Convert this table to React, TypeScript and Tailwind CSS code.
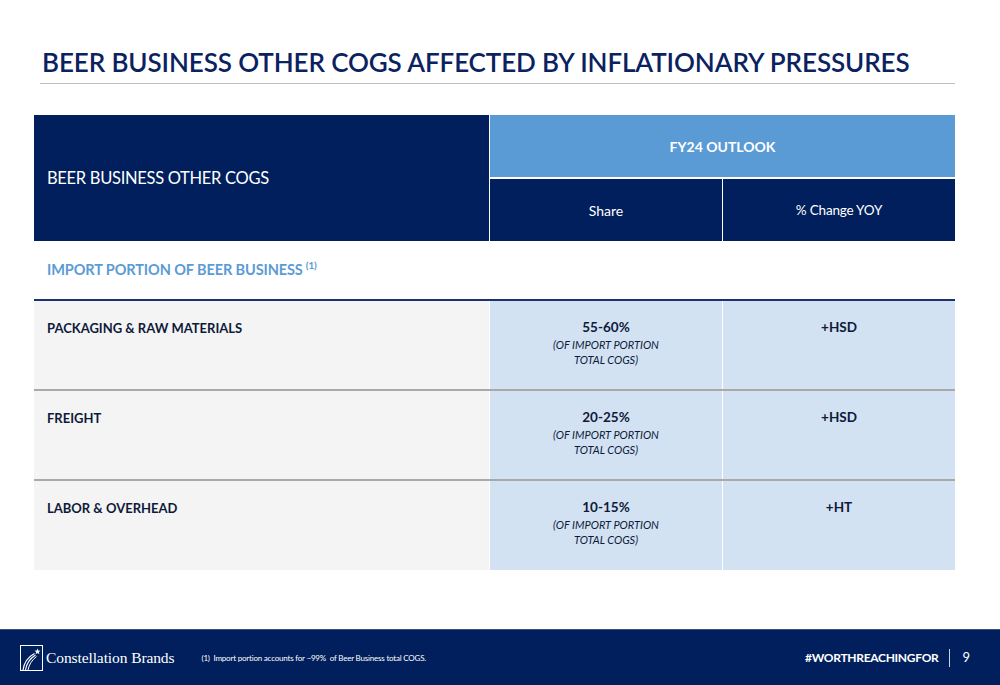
import React from "react";

const body = { fontFamily: "Lato, 'Open Sans', sans-serif" };

function Logo() {
  return (
    <svg width="23" height="26" viewBox="0 0 23 26" fill="none">
      <rect x="0.5" y="0.5" width="22" height="25" stroke="white" strokeWidth="1" />
      <path d="M3 25 C4 18 8 12 14.5 8.5" stroke="white" strokeWidth="1.2" />
      <path d="M5.5 25 C6.5 18.5 10 13.5 15.5 10" stroke="white" strokeWidth="1.2" />
      <path d="M8 25 C9 19.5 12 15 16.5 11.5" stroke="white" strokeWidth="1" />
      <path d="M17.5 3.5 L18.3 5.6 L20.5 5.7 L18.8 7 L19.4 9.2 L17.5 8 L15.6 9.2 L16.2 7 L14.5 5.7 L16.7 5.6 Z" fill="white" />
    </svg>
  );
}

const rows = [
  { label: "PACKAGING & RAW MATERIALS", share: "55-60%", yoy: "+HSD", h: "h-[88px]" },
  { label: "FREIGHT", share: "20-25%", yoy: "+HSD", h: "h-[88px]" },
  { label: "LABOR & OVERHEAD", share: "10-15%", yoy: "+HT", h: "h-[89px]" },
];

export default function App() {
  return (
    <div className="w-[1000px] h-[685px] bg-white flex flex-col overflow-hidden" style={body}>
      <div className="px-[40px] pt-[44px]">
        <h1
          className="text-[26px] leading-[36px] text-[#0b2261] pl-[2px] tracking-[-0.1px] whitespace-nowrap font-semibold"
          style={{ fontFamily: "Lato, sans-serif" }}
        >
          BEER BUSINESS OTHER COGS AFFECTED BY INFLATIONARY PRESSURES
        </h1>
        <div className="mt-[3px] h-px w-[915px] bg-[#bfbfbf]" />
      </div>

      <div className="ml-[34px] w-[921px] mt-[31px]">
        <div className="grid grid-cols-[455px_232px_232px] gap-x-px gap-y-[2px] bg-white">
          <div className="row-span-2 bg-[#001f5c] flex items-center pl-[13px] text-white text-[16.5px] tracking-[-0.3px]">
            BEER BUSINESS OTHER COGS
          </div>
          <div className="col-span-2 h-[62px] bg-[#5b9bd5] flex items-center justify-center text-white font-bold text-[14px]">
            FY24 OUTLOOK
          </div>
          <div className="h-[62px] bg-[#001f5c] flex items-center justify-center text-white text-[14px]">Share</div>
          <div className="h-[62px] bg-[#001f5c] flex items-center justify-center text-white text-[13.5px] tracking-[-0.2px]">% Change YOY</div>
        </div>

        <div className="h-[58px] flex items-center pl-[13px] text-[#5b9bd5] font-bold text-[14.5px] tracking-[-0.1px]">
          IMPORT PORTION OF BEER BUSINESS
          <sup className="text-[10px] ml-[3px] -top-[5px]">(1)</sup>
        </div>
        <div className="h-[2px] bg-[#1f3070]" />

        {rows.map((r, i) => (
          <div key={r.label}>
            {i > 0 && <div className="h-[2px] bg-[#a9a9a9]" />}
            <div className={`grid grid-cols-[455px_232px_232px] gap-x-px ${r.h}`}>
              <div className="bg-[#f4f4f4] pl-[13px] pt-[18px] text-[#0f1a3a] font-bold text-[13px] leading-[18px]">
                {r.label}
              </div>
              <div className="bg-[#d2e2f3] flex flex-col items-center pt-[17px] text-[#0f1a3a]">
                <div className="font-bold text-[13.5px] leading-[19px]">{r.share}</div>
                <div className="italic text-[11px] leading-[15px]">(OF IMPORT PORTION</div>
                <div className="italic text-[11px] leading-[15px]">TOTAL COGS)</div>
              </div>
              <div className="bg-[#d2e2f3] flex justify-center pt-[17px] text-[#0f1a3a] font-bold text-[13.5px] leading-[19px]">
                {r.yoy}
              </div>
            </div>
          </div>
        ))}
      </div>

      <div className="mt-auto h-[56px] bg-[#001f5c] border-t border-[#3a4f86] flex items-center pl-[20px] pr-[30px] text-white">
        <Logo />
        <span className="ml-[3px] text-[15.5px] tracking-[-0.1px]" style={{ fontFamily: "'Liberation Serif', serif" }}>
          Constellation Brands
        </span>
        <span className="ml-[27px] text-[8px] tracking-[-0.2px]">(1)&nbsp; Import portion accounts for ~99%&nbsp; of Beer Business total COGS.</span>
        <span className="ml-auto font-bold text-[12px] tracking-[-0.3px]">#WORTHREACHINGFOR</span>
        <span className="ml-[11px] h-[18px] w-px bg-white/80" />
        <span className="ml-[12px] text-[13px]">9</span>
      </div>
    </div>
  );
}
